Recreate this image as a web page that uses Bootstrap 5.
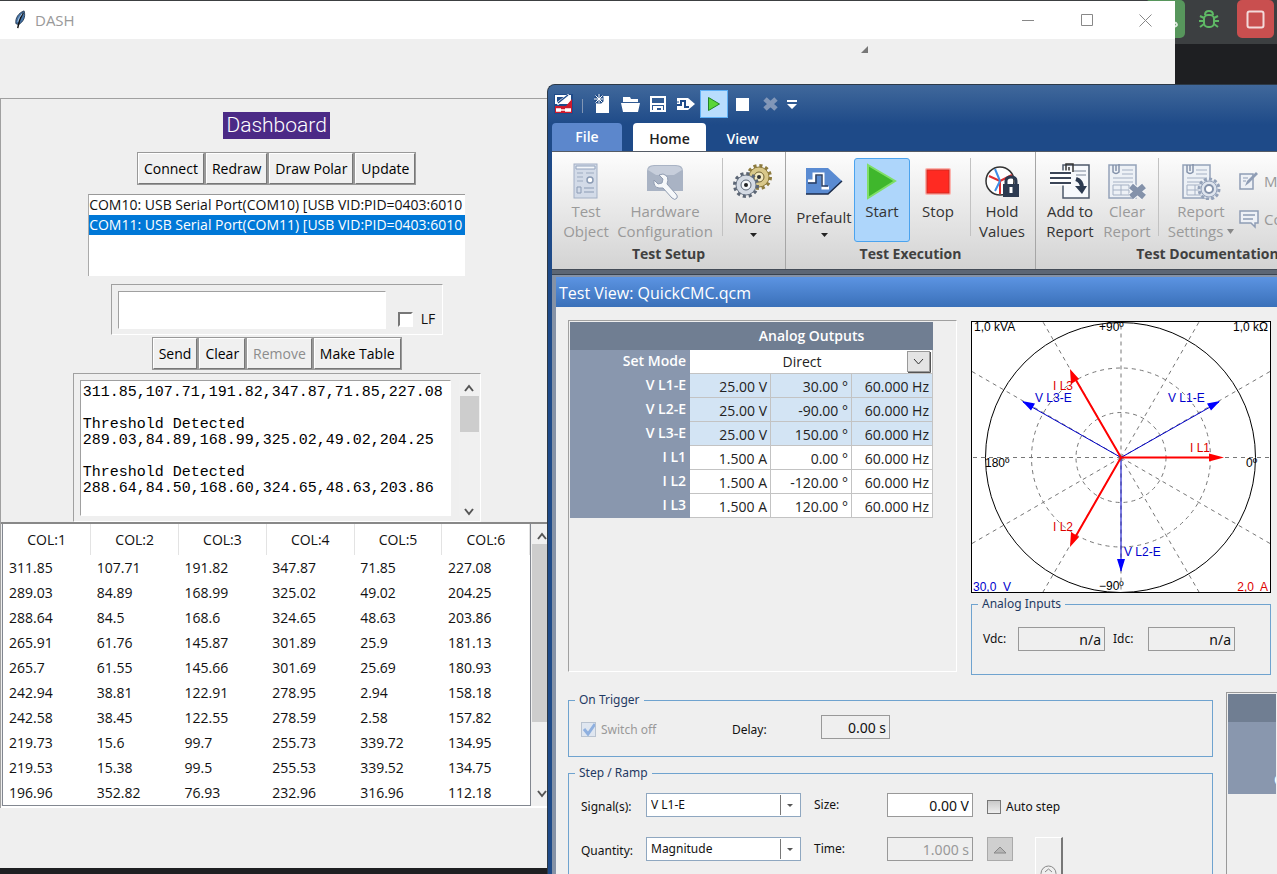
<!DOCTYPE html>
<html lang="en">
<head>
<meta charset="utf-8">
<meta name="viewport" content="width=device-width, initial-scale=1">
<title>DASH</title>
<link rel="stylesheet" href="https://cdn.jsdelivr.net/npm/bootstrap@5.3.0/dist/css/bootstrap.min.css">
<style>
:root{--face:#efefef;--edge:#a0a0a0;--ui:"Open Sans","Noto Sans",sans-serif;--tahoma:"Noto Sans","Open Sans",sans-serif}
body{background:#1e1f22;font-family:var(--ui);font-size:14px;line-height:20px;color:#111;height:100vh}
button,input,select,textarea{font-family:inherit;color:inherit}
svg{display:block;flex:none}

/* IDE toolbar behind the windows */
.ide-bar{background:#3c3f41;height:44px;padding-right:3px;gap:8px}
.ide-btn{width:37px;height:38px;padding:0;border:0;border-radius:5px;display:flex;align-items:center;justify-content:center;background:none}
.ide-run{background:#57965c;width:40px;margin-right:-4px}
.ide-bug{width:40px}
.ide-stop{background:#c94f4f}

/* DASH window */
.dash-win{position:absolute;left:0;top:1px;right:102px;bottom:6px;background:var(--face)}
.dash-title{background:#fff;height:38px;padding-left:13px;color:#999;font-size:15px}
.cap-btn{width:59px;height:37px;padding:0;border:0;background:none;display:flex;align-items:center;justify-content:center}
.dash-menu{height:59px}
.grip{margin-left:861px;margin-top:7px}
.dash-panel{width:47%;border:solid var(--edge);border-width:1px 0 0 1px;padding-top:13px}
.brand{background:#4b2a86;color:#fff;font:300 21px/27px Roboto,sans-serif;padding:0 3px;margin-bottom:13px}
.tk-btn{background:#f0f0f0;border:2px solid;border-color:#fff #777 #777 #fff;outline:1px solid #999;outline-offset:-1px;border-radius:0;font-size:14px;line-height:20px;padding:5px 5px 4px;height:33px;color:#000}
.tk-btn:disabled{background:#f0f0f0;border-color:#fff #777 #777 #fff;color:#8c8c8c;opacity:1}
.sunken{border:solid;border-width:1px;border-color:var(--edge) #fff #fff var(--edge)}
.ports{width:377px;height:82px;background:#fff;border-top:1px solid #999;border-left:1px solid #aaa;margin-top:9px;overflow:hidden}
.port-item{border:0;background:#fff;text-align:left;padding:0;font-size:14px;line-height:20px;white-space:nowrap}
.port-item.on{background:#0078d7;color:#fff}
.entry-box{width:332px;padding:6px 5px 5px 6px;margin-top:8px;margin-bottom:2px;gap:12px}
.entry{background:#fff;border-radius:0;height:38px;width:268px;flex:none;box-shadow:none;padding:2px}
.tk-check{appearance:none;width:15px;height:15px;background:#fff;border:2px solid;border-color:#777 #fff #fff #777;margin:0;border-radius:0}
.log-box{width:408px;height:149px;padding:6px 0 5px 6px;margin-top:3px}
.log{flex:1;background:#fff;font:15px/16px "Liberation Mono",monospace;color:#000;padding:4px 2px;resize:none;overflow:hidden;white-space:pre}
.vscroll{width:21px;background:#f0f0f0;padding:8px 0;flex:none}
.vthumb{background:#cdcdcd;width:19px;margin:0 auto auto}
.tree-box{border-top:2px solid #888;border-bottom:2px solid #fff;padding-left:1px}
.tree{flex:1;border:1px solid #828790;border-top:0;background:#fff;margin:0;height:282px}
.tree table{table-layout:fixed;width:100%;margin:0;font-size:14px;line-height:20px}
.tree th{font-weight:400;text-align:center;padding:6px 0 5px;border-right:1px solid #e3e3e3}
.tree td{padding:3px 6px 2px}

/* QuickCMC window */
.cmc-win{position:absolute;left:547px;top:84px;right:0;bottom:0;background:#1e4a88;border-top:1px solid #2c3947;border-left:1px solid #2c3947;border-top-left-radius:8px;padding-left:4px;overflow:hidden}
.cmc-head{margin-left:-4px;padding-left:4px;height:66px;background:linear-gradient(#40689b,#1e4a88 60%)}
.qat{height:38px;padding-left:2px}
.qat-sep{width:1px;height:14px;background:#8196b5;margin:4px 5px 0 9px}
.qat-btn{width:28px;height:28px;padding:0;border:1px solid transparent;background:none;display:flex;align-items:center;justify-content:center;flex:none}
.qat-btn.on{background:#b9ddfd;border-color:#5fb0f5}
.qat-more{width:16px}
.tabs{height:28px;font-size:14px}
.tab-btn{border:0;border-radius:4px 4px 0 0;color:#fff;padding:0;height:28px;font-weight:600;font-size:14px;line-height:28px;background:none}
.tab-file{width:70px;background:#5c87cc}
.tab-home{width:73px;background:#fff;color:#222;margin-left:11px;padding-top:2px}
.tab-view{width:73px;padding-top:2px}
.ribbon{height:119px;background:linear-gradient(#fdfdfd,#d3d3d3);border-top:1px solid #555c66;border-bottom:1px solid #444c57;overflow:hidden}
.rgroup{flex:none;border-right:1px solid #a6a6a6;height:117px}
.rgroup-row{height:92px;padding-top:6px}
.rgroup-name{font-size:14px;font-weight:700;line-height:20px;text-align:center;color:#404040}
.rbtn{border:1px solid transparent;border-radius:3px;background:none;padding:4px 0 0;height:84px;display:flex;flex-direction:column;align-items:center;font-size:15px;line-height:20px;color:#333;flex:none}
.rbtn svg{margin-bottom:1px}
.rbtn:disabled{color:#9a9a9a}
.rbtn.on{background:#aed6fb;border-color:#4ba3ee}
.rbtn.low svg:first-child{margin-bottom:7px}
.rbtn.low svg:last-child{margin-top:6px}
.rsep{width:1px;height:78px;background:#c2c2c2;flex:none}
.w52{width:52px}.w56{width:56px}.w60{width:60px}.w62{width:62px}.w76{width:76px}.w106{width:106px}
.rside{border:0;background:none;padding:0;color:#999;font-size:15px;height:38px;white-space:nowrap;display:flex;align-items:center;gap:5px}
.under{height:4px;background:#5c6674}
.view-win{background:#8592a6;padding:2px 0 0 4px;border-top:1px solid #39434f}
.view-title{background:linear-gradient(#5c94e2,#3a70b9);color:#fff;font-size:16px;line-height:32px;padding-left:3px;margin:0;font-weight:400;height:30px}
.view-body{background:var(--face);padding:13px 0 0 12px;overflow:hidden}
.out-frame{flex:1;height:352px}
.out-table{width:363px;font-size:14px;line-height:20px;table-layout:fixed;margin:1px;border-collapse:separate;border-spacing:0}
.out-table td,.out-table tbody th{height:24px;padding:3px 3px 0;text-align:right}
.out-table thead th{background:#707e92;color:#fff;height:28px;padding:0;font-weight:600;text-align:center}
.out-table tbody th{background:#8997ae;color:#fff;font-weight:600;padding:1px 4px 3px}
.out-table td{background:#fff;border-right:1px solid #c3c3c3;border-bottom:1px solid #c3c3c3;color:#222}
.out-table .volt td{background:#d3e4f4}
.out-table td.pick{padding:0}
.mode{border:0;border-radius:0;height:23px;width:100%;padding:0 26px 0 8px;font-size:14px;line-height:22px;text-align-last:center;appearance:none;background:#fff url("data:image/svg+xml,%3Csvg xmlns='http://www.w3.org/2000/svg' width='24' height='22'%3E%3Crect x='.5' y='.5' width='22' height='20' fill='%23e4e4e4' stroke='%23999'/%3E%3Cpath d='M1 21.5h22.500V1' fill='none' stroke='%23555'/%3E%3Cpath d='M7 8l4.500 5L16 8' fill='none' stroke='%23333'/%3E%3C/svg%3E") no-repeat right 1px top 1px}
.side{width:300px;flex:none}
.polar{border:1px solid #000;background:#fff;width:100%;height:272px;margin-top:1px}
.polar text{font:12px "Liberation Sans",sans-serif}
fieldset.box{border:1px solid #6fa3cf;font-family:var(--tahoma);font-size:12px;line-height:16px}
fieldset.box legend{float:none;width:auto;margin:0 0 0 6px;padding:0 4px;font-size:12px;line-height:16px;color:#1f3a63}
.inputs-row{padding:15px 0 23px 11px}
.inputs-row label{width:35px}
.inputs-row .cell{width:87px}
.cell{border:1px solid #999;border-radius:0;background:#fff;height:24px;padding:0 3px;font-size:14px;text-align:right;width:86px;flex:none}
.cell:disabled,.cell[readonly]{background:var(--face)}
.cell:disabled{color:#999}
.combo{border:1px solid #8fa7c0;border-radius:0;height:24px;width:155px;flex:none;padding:0 24px 0 4px;font-size:12px;line-height:20px;appearance:none;background:#fff url("data:image/svg+xml,%3Csvg xmlns='http://www.w3.org/2000/svg' width='20' height='20'%3E%3Cpath d='M.5 0v20' stroke='%23777'/%3E%3Cpath d='M7 9h6l-3 3z' fill='%23555'/%3E%3C/svg%3E") no-repeat right center}
.form-grid{display:grid;grid-template-columns:65px 168px 73px 100px 1fr;row-gap:20px;align-items:center;padding:12px 0 60px 12px}
.form-grid .tail{height:24px}
.trigger-row{padding:7px 0 17px 12px}
.trigger-row label{padding-top:5px}
.switch-off{width:151px;color:#999}
.box-check{width:14px;height:14px;margin:0 5px 0 0;border-radius:0;border:1px solid #777;background:linear-gradient(#c9c9c9,#eee);appearance:none;flex:none}
.box-check:checked:disabled{width:15px;height:15px;border-color:#b9c3d0;background:#dfe6f0 url("data:image/svg+xml,%3Csvg xmlns='http://www.w3.org/2000/svg' width='14' height='14'%3E%3Cpath d='M2 6l4 5 7-10' fill='none' stroke='%238fb0df' stroke-width='3'/%3E%3C/svg%3E")}
.bottom{gap:13px;margin-top:17px}
.delay{width:89px}
.cell.delay-cell{width:69px}
.spin-btn{width:26px;height:24px;padding:0;background:#cfcfcf;border:1px solid #aaa;border-radius:0;display:flex;align-items:center;justify-content:center}
.knob{width:28px;height:58px;padding:27px 0 0 4px;border:solid;border-color:#fff #777 #777 #fff;border-width:1px 2px 1px 1px;background:var(--face);margin-left:22px;flex:none;display:flex;align-items:flex-start}
.result{width:51px;flex:none;border:solid #999;border-width:1px 0 0 1px;padding:1px;height:260px;color:#fff;font-weight:600}
.result-head{height:28px;background:#707e92}
.result-body{height:72px;background:#8997ae;padding-top:48px;padding-left:46px;overflow:hidden;white-space:nowrap}
</style>
</head>
<body class="position-relative overflow-hidden">

<header class="ide-bar d-flex justify-content-end align-items-start">
  <button class="ide-btn ide-run" aria-label="Rerun"><svg width="37" height="37"><path d="M26 14v3M24 22c7-2 8 4 2 4" stroke="#dce8dd" stroke-width="2" fill="none"/></svg></button>
  <button class="ide-btn ide-bug" aria-label="Debug"><svg width="22" height="20" viewBox="0 0 22 20" fill="none" stroke="#5fb865" stroke-width="2"><rect x="6" y="6" width="10" height="12" rx="4"/><path d="M7 6q0-4 4-4t4 4M6 9L2 7M6 12H1M6 15l-4 3M16 9l4-2M16 12h5M16 15l4 3"/></svg></button>
  <button class="ide-btn ide-stop" aria-label="Stop"><svg width="19" height="19"><rect x="1.500" y="1.500" width="16" height="16" rx="2" fill="none" stroke="#f3dada" stroke-width="2"/></svg></button>
</header>

<main class="dash-win">
  <div class="dash-title d-flex align-items-center">
    <svg width="14" height="20" viewBox="0 0 15 22"><path d="M12 1C6 3 2 9 3 15l3 1c5-3 8-8 6-15z" fill="#4674a8" stroke="#26384f"/><path d="M11 3C8 8 6 13 5 20" stroke="#111" stroke-width="1.500" fill="none"/><path d="M10 4q-4 4-5 9" stroke="#b8d2ea" fill="none"/></svg>
    <span class="ms-2 me-auto">DASH</span>
    <button class="cap-btn" aria-label="Minimize"><svg width="12" height="12"><path d="M0 6.500h12" stroke="#888"/></svg></button>
    <button class="cap-btn" aria-label="Maximize"><svg width="12" height="12"><path d="M.5.5h11v11H.5z" stroke="#888" fill="none"/></svg></button>
    <button class="cap-btn" aria-label="Close"><svg width="13" height="13"><path d="M.5.5l12 12M12.500.5l-12 12" stroke="#888" fill="none"/></svg></button>
  </div>
  <div class="dash-menu d-flex align-items-start"><svg class="grip" width="7" height="7"><path d="M0 7h7V0z" fill="#777"/></svg></div>

  <section class="dash-panel">
    <div class="d-flex flex-column align-items-center">
      <div class="brand">Dashboard</div>
      <div class="d-flex">
        <button class="btn tk-btn">Connect</button><button class="btn tk-btn">Redraw</button><button class="btn tk-btn">Draw Polar</button><button class="btn tk-btn">Update</button>
      </div>
      <div class="ports list-group rounded-0">
        <button class="port-item">COM10: USB Serial Port(COM10) [USB VID:PID=0403:6010</button>
        <button class="port-item on">COM11: USB Serial Port(COM11) [USB VID:PID=0403:6010</button>
      </div>
      <div class="entry-box sunken d-flex align-items-end">
        <input class="form-control entry sunken" type="text" aria-label="Command">
        <label class="d-flex align-items-center gap-2"><input class="tk-check" type="checkbox">LF</label>
      </div>
      <div class="d-flex">
        <button class="btn tk-btn">Send</button><button class="btn tk-btn">Clear</button><button class="btn tk-btn" disabled>Remove</button><button class="btn tk-btn">Make Table</button>
      </div>
      <div class="log-box sunken d-flex gap-2">
        <textarea class="log sunken" aria-label="Log" readonly>311.85,107.71,191.82,347.87,71.85,227.08

Threshold Detected
289.03,84.89,168.99,325.02,49.02,204.25

Threshold Detected
288.64,84.50,168.60,324.65,48.63,203.86</textarea>
        <div class="vscroll d-flex flex-column align-items-center pt-1 pb-0">
          <svg width="10" height="8"><path d="M1 7l4-5 4 5" stroke="#555" stroke-width="2" fill="none"/></svg>
          <div class="vthumb mt-1" style="height:36px"></div>
          <svg width="10" height="8"><path d="M1 1l4 5 4-5" stroke="#555" stroke-width="2" fill="none"/></svg>
        </div>
      </div>
    </div>
    <div class="tree-box d-flex">
      <div class="tree">
        <table>
          <thead><tr><th>COL:1</th><th>COL:2</th><th>COL:3</th><th>COL:4</th><th>COL:5</th><th>COL:6</th></tr></thead>
          <tbody>
            <tr><td>311.85</td><td>107.71</td><td>191.82</td><td>347.87</td><td>71.85</td><td>227.08</td></tr>
            <tr><td>289.03</td><td>84.89</td><td>168.99</td><td>325.02</td><td>49.02</td><td>204.25</td></tr>
            <tr><td>288.64</td><td>84.5</td><td>168.6</td><td>324.65</td><td>48.63</td><td>203.86</td></tr>
            <tr><td>265.91</td><td>61.76</td><td>145.87</td><td>301.89</td><td>25.9</td><td>181.13</td></tr>
            <tr><td>265.7</td><td>61.55</td><td>145.66</td><td>301.69</td><td>25.69</td><td>180.93</td></tr>
            <tr><td>242.94</td><td>38.81</td><td>122.91</td><td>278.95</td><td>2.94</td><td>158.18</td></tr>
            <tr><td>242.58</td><td>38.45</td><td>122.55</td><td>278.59</td><td>2.58</td><td>157.82</td></tr>
            <tr><td>219.73</td><td>15.6</td><td>99.7</td><td>255.73</td><td>339.72</td><td>134.95</td></tr>
            <tr><td>219.53</td><td>15.38</td><td>99.5</td><td>255.53</td><td>339.52</td><td>134.75</td></tr>
            <tr><td>196.96</td><td>352.82</td><td>76.93</td><td>232.96</td><td>316.96</td><td>112.18</td></tr>
          </tbody>
        </table>
      </div>
      <div class="vscroll d-flex flex-column align-items-center">
        <svg width="10" height="8"><path d="M1 7l4-5 4 5" stroke="#555" stroke-width="2" fill="none"/></svg>
        <div class="vthumb mt-1" style="height:178px"></div>
        <svg width="10" height="8"><path d="M1 1l4 5 4-5" stroke="#555" stroke-width="2" fill="none"/></svg>
      </div>
    </div>
  </section>
</main>

<section class="cmc-win" aria-label="QuickCMC">
  <div class="cmc-head">
    <div class="qat d-flex align-items-center">
      <svg width="19" height="20" viewBox="0 0 19 20"><path d="M0 0h19v20H0z" fill="#1f4b8a"/><path d="M1 1h16v9H1z" fill="#fff"/><path d="M3 3h10L6 9H3z" fill="#1f4b8a"/><path d="M3 10L15 1" stroke="#fff" stroke-width="3"/><path d="M4 9L14 1" stroke="#1f4b8a" stroke-width="1.500"/><path d="M18 5v14H1v-7h11z" fill="#cf1a2d"/><path d="M2 16h5M11 16h6" stroke="#fff" stroke-width="3.500"/><path d="M6 16h6" stroke="#fff" stroke-width="1.500"/></svg>
      <span class="qat-sep"></span>
      <button class="qat-btn" aria-label="New"><svg width="18" height="20"><path d="M3 2h13v17H3z" fill="#fff"/><path d="M6 0v10M1 5h10M2.500 1.500l7 7M9.500 1.500l-7 7" stroke="#1f4a86" stroke-width="3"/><path d="M6 0v10M1 5h10M2.500 1.500l7 7M9.500 1.500l-7 7" stroke="#fff"/></svg></button>
      <button class="qat-btn" aria-label="Open"><svg width="19" height="16"><path d="M2 1h7l1 2h7v3H2zM0 7h19l-2 9H2z" fill="#fff"/></svg></button>
      <button class="qat-btn" aria-label="Save"><svg width="16" height="16" fill="none" stroke="#fff" stroke-width="2"><path d="M1 1h14v14H1z"/><path d="M1 8h14"/><path d="M4 15v-4h8v4M6 12v2"/></svg></button>
      <button class="qat-btn" aria-label="Prefault"><svg width="18" height="14"><path d="M0 1h11l7 6-7 6H0z" fill="#fff"/><path d="M0 8h4V4h4v6h4" fill="none" stroke="#214c8a" stroke-width="2"/><path d="M0 5h2" stroke="#214c8a"/></svg></button>
      <button class="qat-btn on" aria-label="Start"><svg width="14" height="16"><path d="M1.500 1.500l11 6.500-11 6.500z" fill="#5ad637" stroke="#22832a"/></svg></button>
      <button class="qat-btn" aria-label="Stop"><svg width="13" height="13"><path d="M0 0h13v13H0z" fill="#fff"/></svg></button>
      <button class="qat-btn" aria-label="Clear"><svg width="15" height="14"><path d="M2 2l11 10M13 2L2 12" stroke="#8297b8" stroke-width="5"/></svg></button>
      <button class="qat-btn qat-more" aria-label="Customize"><svg width="10" height="9"><path d="M0 0h10v2H0zM0 4h10L5 9z" fill="#fff"/></svg></button>
    </div>
    <nav class="tabs d-flex">
      <button class="tab-btn tab-file">File</button>
      <button class="tab-btn tab-home">Home</button>
      <button class="tab-btn tab-view">View</button>
    </nav>
  </div>

  <div class="ribbon d-flex">
    <div class="rgroup" style="width:234px">
      <div class="rgroup-row d-flex ps-2">
        <button class="rbtn w52" disabled><svg width="26" height="37" viewBox="0 0 26 37"><rect x="1" y="1" width="23" height="34" fill="#d3dbe8" stroke="#a3b0c5"/><path d="M3 3h19v3H3z" fill="#f3f6fa" stroke="#94a4bd"/><path d="M4 10h6M4 14h6M13 10h8M4 18h6" stroke="#9dabc0"/><circle cx="17" cy="17" r="3" fill="#fff" stroke="#8b9bb4" stroke-width="1.500"/><path d="M4 24h4v6H4zM11 25h10M11 29h10" fill="none" stroke="#8b9bb4"/></svg>Test<br>Object</button>
        <button class="rbtn w106" disabled><svg width="38" height="37" viewBox="0 0 38 37"><path d="M1 8q0-6 7-6h22q7 0 7 6v20H1z" fill="#a9b3c4"/><path d="M2 7q1-4 7-4h20q6 0 7 4l-8 5H10z" fill="#c7cedb"/><path d="M13 12l4 4-1 4-4 1-4-4q-1 7 5 8l4 0 9 10q3 3 5 0 1-2-1-4L21 21q3-8-4-10z" fill="#f6f8fa" stroke="#8f9bb0"/></svg>Hardware<br>Configuration</button>
        <span class="rsep ms-1"></span>
        <button class="rbtn low w60"><svg width="40" height="37" viewBox="0 0 40 37"><circle cx="26" cy="14" r="11" fill="none" stroke="#8d7b3e" stroke-width="4" stroke-dasharray="3 2.760"/><circle cx="26" cy="14" r="10" fill="#d9c88a" stroke="#8d7b3e"/><circle cx="26" cy="14" r="5" fill="#f3e9c0" stroke="#6e6132"/><circle cx="26" cy="14" r="2" fill="#333"/><circle cx="13" cy="22" r="11" fill="none" stroke="#5c6675" stroke-width="4" stroke-dasharray="3 2.760"/><circle cx="13" cy="22" r="10" fill="#d5dbe4" stroke="#6b7686"/><circle cx="13" cy="22" r="5" fill="#f5f7fa" stroke="#5c6675"/><circle cx="13" cy="22" r="2" fill="#222"/></svg>More<svg width="7" height="4"><path d="M0 0h7L3.500 4z" fill="#222"/></svg></button>
      </div>
      <div class="rgroup-name">Test Setup</div>
    </div>
    <div class="rgroup" style="width:250px">
      <div class="rgroup-row d-flex ps-2">
        <button class="rbtn low w60"><svg width="38" height="37" viewBox="0 0 38 37"><path d="M1 5h22l14 13-14 13H1z" fill="#5a8bd2"/><path d="M1 31h22l14-13" stroke="#1c2d4c" stroke-width="1.500" fill="none"/><path d="M3 18h6v-7h9v14h6" stroke="#fff" stroke-width="3" fill="none"/><path d="M3 20h8v-8h6v11h6" stroke="#2b3f63" stroke-width="1.500" fill="none"/></svg>Prefault<svg width="7" height="4"><path d="M0 0h7L3.500 4z" fill="#222"/></svg></button>
        <button class="rbtn w56 on"><svg width="32" height="37" viewBox="0 0 32 37"><path d="M2 2l27 16L2 35z" fill="#3fb72c" stroke="#7fdf67" stroke-width="2"/></svg>Start</button>
        <button class="rbtn w56"><svg width="28" height="37" viewBox="0 0 28 37"><rect x="1" y="5" width="26" height="27" rx="2" fill="#fbb3ae"/><rect x="3" y="7" width="22" height="23" fill="#ff2a22" stroke="#d3281e"/></svg>Stop</button>
        <span class="rsep ms-1"></span>
        <button class="rbtn w62"><svg width="36" height="37" viewBox="0 0 36 37"><circle cx="16" cy="18" r="14" fill="#fff" stroke="#333" stroke-width="1.500"/><path d="M16 18l-11-5M16 18l12-6M16 18v13" stroke="#e03030" stroke-width="2"/><path d="M16 18L11 6M16 18l-5 10" stroke="#3f8fe6" stroke-width="2"/><path d="M22 22v-4q0-4 5-4t5 4v4" fill="none" stroke="#2c3a50" stroke-width="3"/><path d="M19 21h16v13H19z" fill="#2c3a50"/><path d="M27 24v6" stroke="#fff" stroke-width="3"/></svg>Hold<br>Values</button>
      </div>
      <div class="rgroup-name">Test Execution</div>
    </div>
    <div class="rgroup" style="width:344px">
      <div class="rgroup-row d-flex ps-2">
        <button class="rbtn w52"><svg width="42" height="37" viewBox="0 0 42 37"><path d="M14 2h26v33H14z" fill="#f7f9fc" stroke="#4d586a" stroke-width="1.500"/><path d="M25 8h12M27 12h10" stroke="#7b8698"/><path d="M17 9V1h7v8M20 9V4" stroke="#333" stroke-width="1.500" fill="none"/><path d="M1 10h21M1 15h21M1 20h21" stroke="#fff" stroke-width="5"/><path d="M1 10h21M1 15h21M1 20h21" stroke="#3c4658" stroke-width="2"/><path d="M27 16q6 2 6 9" stroke="#2c3a50" stroke-width="4" fill="none"/><path d="M26 23h12l-5 8z" fill="#2c3a50"/></svg>Add to<br>Report</button>
        <button class="rbtn w62" disabled><svg width="40" height="37" viewBox="0 0 40 37"><path d="M2 2h27v33H2z" fill="#edf1f6" stroke="#94a2b9" stroke-width="1.500"/><path d="M15 7h11M15 11h11M6 15h20M6 19h20M6 22h16v10H6zM6 27h16M14 22v10" stroke="#a5b1c4" fill="none"/><path d="M6 2v7q3 3 6 0V1M9 2v6" stroke="#8492aa" stroke-width="1.500" fill="none"/><path d="M24 23l13 11M37 23L24 34" stroke="#f4f6f8" stroke-width="8"/><path d="M24 23l13 11M37 23L24 34" stroke="#8492aa" stroke-width="6"/></svg>Clear<br>Report</button>
        <span class="rsep"></span>
        <button class="rbtn w76 ms-1" disabled><svg width="40" height="37" viewBox="0 0 40 37"><path d="M2 2h27v33H2z" fill="#edf1f6" stroke="#94a2b9" stroke-width="1.500"/><path d="M15 7h11M15 11h11M6 15h20M6 19h20M6 22h16v10H6zM6 27h16M14 22v10" stroke="#a5b1c4" fill="none"/><path d="M6 2v7q3 3 6 0V1M9 2v6" stroke="#8492aa" stroke-width="1.500" fill="none"/><circle cx="28" cy="26" r="10" fill="#dfe5ee" stroke="#94a2b9" stroke-width="3" stroke-dasharray="3 2.200"/><circle cx="28" cy="26" r="8" fill="#dfe5ee" stroke="#94a2b9"/><circle cx="28" cy="26" r="4" fill="#fff" stroke="#8492aa" stroke-width="2"/></svg><span>Report</span><span class="d-flex align-items-center gap-1">Settings<svg class="m-0" width="7" height="5"><path d="M0 0h7L3.500 5z" fill="#888"/></svg></span></button>
        <div class="pt-1">
          <button class="rside" disabled><svg width="20" height="20" viewBox="0 0 20 20"><path d="M1 3h13v15H1z" fill="#eef1f6" stroke="#8f9db5" stroke-width="1.500"/><path d="M4 7h5M4 10h3" stroke="#8f9db5"/><path d="M6 15l2-5 9-9 2 2-9 9z" fill="#8f9db5"/></svg>Manage</button>
          <button class="rside" disabled><svg width="20" height="20" viewBox="0 0 20 20"><path d="M1 2h18v12h-3v4l-4-4H1z" fill="#eef1f6" stroke="#8f9db5" stroke-width="1.500"/><path d="M4 6h12M4 10h10" stroke="#8f9db5" stroke-width="1.500"/></svg>Comment</button>
        </div>
      </div>
      <div class="rgroup-name">Test Documentation</div>
    </div>
  </div>
  <div class="under"></div>

  <div class="view-win">
    <h1 class="view-title">Test View: QuickCMC.qcm</h1>
    <div class="view-body">
      <div class="d-flex" style="gap:14px;padding-right:6px">
        <div class="out-frame sunken">
          <table class="out-table">
            <colgroup><col style="width:120px"><col><col><col></colgroup>
            <thead><tr><th></th><th colspan="3">Analog Outputs</th></tr></thead>
            <tbody>
              <tr><th><label for="mode">Set Mode</label></th><td colspan="3" class="pick"><select class="mode" id="mode"><option>Direct</option></select></td></tr>
              <tr class="volt"><th>V L1-E</th><td>25.00 V</td><td>30.00 °</td><td>60.000 Hz</td></tr>
              <tr class="volt"><th>V L2-E</th><td>25.00 V</td><td>-90.00 °</td><td>60.000 Hz</td></tr>
              <tr class="volt"><th>V L3-E</th><td>25.00 V</td><td>150.00 °</td><td>60.000 Hz</td></tr>
              <tr><th>I L1</th><td>1.500 A</td><td>0.00 °</td><td>60.000 Hz</td></tr>
              <tr><th>I L2</th><td>1.500 A</td><td>-120.00 °</td><td>60.000 Hz</td></tr>
              <tr><th>I L3</th><td>1.500 A</td><td>120.00 °</td><td>60.000 Hz</td></tr>
            </tbody>
          </table>
        </div>
        <div class="side">
          <svg class="polar" viewBox="0 0 298 270">
            <g fill="none" stroke="#777" stroke-dasharray="4 4">
              <circle cx="149" cy="135.500" r="45"/><circle cx="149" cy="135.500" r="89.500"/>
              <path d="M149 135.500H298M149 135.500H0M149 135.500V0M149 135.500V270M149 135.500L298 49.500M149 135.500L0 49.500M149 135.500L298 221.500M149 135.500L0 221.500M149 135.500L227 0M149 135.500L71 0M149 135.500L227 270M149 135.500L71 270"/>
            </g>
            <circle cx="148.500" cy="135.500" r="135" fill="none" stroke="#000"/>
            <g fill="#000"><text x="2" y="9">1,0 kVA</text><text x="296" y="9" text-anchor="end">1,0 kΩ</text><text x="127" y="9">+90º</text><text x="127" y="268">−90º</text><text x="13" y="145">180º</text><text x="274" y="145">0º</text></g>
            <g stroke="#0000c8" fill="#00f"><path d="M149 135.500L247 80M149 135.500L51 80M149 135.500V249" fill="none"/>
              <path stroke="none" d="M248 79l-13 2.500 4 7zM50 79l13 2.500-4 7zM149 250l-4-13h8z"/></g>
            <g stroke="#f00" stroke-width="2" fill="#f00"><path d="M149 135.500H245M149 135.500L101 53M149 135.500L101 219" fill="none"/>
              <path stroke="none" d="M252 135.500l-15-4v8zM98 47l1 15 8-5zM98 225l1-15 8 5z"/></g>
            <g fill="#00c"><text x="196" y="80">V L1-E</text><text x="63" y="80">V L3-E</text><text x="152" y="234">V L2-E</text><text x="1" y="269" xml:space="preserve">30,0  V</text></g>
            <g fill="#d00"><text x="218" y="130">I L1</text><text x="81" y="68">I L3</text><text x="81" y="209">I L2</text><text x="296" y="269" text-anchor="end" xml:space="preserve">2,0  A</text></g>
          </svg>
          <fieldset class="box" style="margin-top:3px">
            <legend>Analog Inputs</legend>
            <div class="inputs-row d-flex align-items-center">
              <label for="vdc">Vdc:</label><input class="cell me-2" id="vdc" value="n/a" readonly>
              <label for="idc">Idc:</label><input class="cell" id="idc" value="n/a" readonly>
            </div>
          </fieldset>
        </div>
      </div>

      <div class="bottom d-flex align-items-start">
        <div class="flex-fill">
          <fieldset class="box">
            <legend>On Trigger</legend>
            <div class="trigger-row d-flex align-items-center">
              <label class="switch-off d-flex align-items-center"><input class="box-check" type="checkbox" checked disabled>Switch off</label>
              <label class="delay" for="delay">Delay:</label><input class="cell delay-cell" id="delay" value="0.00 s" readonly>
            </div>
          </fieldset>
          <fieldset class="box mt-2">
            <legend>Step / Ramp</legend>
            <div class="form-grid">
              <label class="pt-1" for="sig">Signal(s):</label><select class="combo" id="sig"><option>V L1-E</option></select>
              <label for="size">Size:</label><input class="cell" id="size" value="0.00 V">
              <label class="d-flex align-items-center pt-1"><input class="box-check" type="checkbox">Auto step</label>
              <label class="pt-1" for="qty">Quantity:</label><select class="combo" id="qty"><option>Magnitude</option></select>
              <label for="time">Time:</label><input class="cell" id="time" value="1.000 s" disabled>
              <div class="tail d-flex align-items-start"><button class="spin-btn" disabled aria-label="Step up"><svg width="14" height="9"><path d="M1 8l6-6 6 6z" fill="#b5b5b5" stroke="#888"/></svg></button>
                <button class="knob" aria-label="Wheel"><svg width="17" height="17"><circle cx="8.500" cy="8.500" r="7.500" fill="none" stroke="#888"/><path d="M5 7l3.500-3L12 7M5 10l3.500 3 3.500-3" fill="none" stroke="#888"/></svg></button></div>
            </div>
          </fieldset>
        </div>
        <div class="result"><div class="result-head"></div><div class="result-body">Out</div></div>
      </div>
    </div>
  </div>
</section>
<script src="https://cdn.jsdelivr.net/npm/bootstrap@5.3.0/dist/js/bootstrap.bundle.min.js"></script>
</body>
</html>
